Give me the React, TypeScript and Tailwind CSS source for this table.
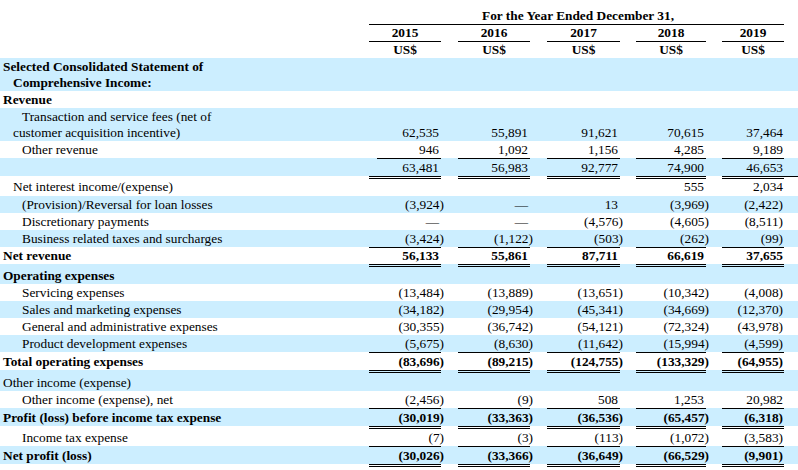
import React from "react";

const COLS =
  "grid grid-cols-[369px_72px_17px_72px_17px_73px_16px_70px_16px_62px_1fr]";

type Row = {
  bg?: boolean;
  b: 0 | 1 | 3;
  h: string;
  label?: React.ReactNode;
  lc?: string;
  vals?: (string | null)[];
  u?: boolean;
  bold?: boolean;
  vc?: string;
  first?: string;
  extra?: boolean;
};

function bcls(b: 0 | 1 | 3, on: boolean) {
  if (b === 0) return "";
  if (b === 1) return on ? "border-t border-black" : "border-t border-transparent";
  return on
    ? "border-t-[3px] border-double border-black"
    : "border-t-[3px] border-transparent";
}

const rows: Row[] = [
  {
    bg: true,
    b: 0,
    h: "h-[33px]",
    label: (
      <>
        Selected Consolidated Statement of
        <br />
        Comprehensive Income:
      </>
    ),
    lc: "pl-[13px] indent-[-10px] leading-[16px] pt-[1px] font-bold",
  },
  { b: 0, h: "h-[17px]", label: "Revenue", lc: "pl-[3px] font-bold leading-[17px]" },
  {
    bg: true,
    b: 0,
    h: "h-[33px]",
    label: (
      <>
        Transaction and service fees (net of
        <br />
        customer acquisition incentive)
      </>
    ),
    lc: "pl-[13px] indent-[9px] leading-[16px] pt-[1px]",
    vals: ["62,535", "55,891", "91,621", "70,615", "37,464"],
    vc: "pt-[17px] leading-[16px]",
  },
  {
    b: 0,
    h: "h-[17px]",
    label: "Other revenue",
    lc: "pl-[22px] leading-[17px]",
    vals: ["946", "1,092", "1,156", "4,285", "9,189"],
  },
  {
    bg: true,
    b: 1,
    u: true,
    h: "h-[18px]",
    label: "",
    lc: "",
    first: "ml-[8px]",
    vals: ["63,481", "56,983", "92,777", "74,900", "46,653"],
  },
  {
    b: 3,
    u: true,
    extra: true,
    h: "h-[20px]",
    label: "Net interest income/(expense)",
    lc: "pl-[13px] leading-[16px]",
    vals: [null, null, null, "555", "2,034"],
    vc: "leading-[16px]",
  },
  {
    bg: true,
    b: 0,
    h: "h-[17px]",
    label: "(Provision)/Reversal for loan losses",
    lc: "pl-[22px] leading-[17px]",
    vals: ["(3,924)", "—", "13", "(3,969)", "(2,422)"],
  },
  {
    b: 0,
    h: "h-[17px]",
    label: "Discretionary payments",
    lc: "pl-[22px] leading-[17px]",
    vals: ["—", "—", "(4,576)", "(4,605)", "(8,511)"],
  },
  {
    bg: true,
    b: 0,
    h: "h-[17px]",
    label: "Business related taxes and surcharges",
    lc: "pl-[22px] leading-[17px]",
    vals: ["(3,424)", "(1,122)", "(503)", "(262)", "(99)"],
  },
  {
    b: 1,
    u: true,
    h: "h-[17px]",
    bold: true,
    label: "Net revenue",
    lc: "pl-[3px] font-bold leading-[16px]",
    vals: ["56,133", "55,861", "87,711", "66,619", "37,655"],
    vc: "leading-[16px]",
  },
  {
    bg: true,
    b: 3,
    u: true,
    h: "h-[20px]",
    label: "Operating expenses",
    lc: "pl-[3px] font-bold leading-[17px]",
  },
  {
    b: 0,
    h: "h-[17px]",
    label: "Servicing expenses",
    lc: "pl-[22px] leading-[17px]",
    vals: ["(13,484)", "(13,889)", "(13,651)", "(10,342)", "(4,008)"],
  },
  {
    bg: true,
    b: 0,
    h: "h-[17px]",
    label: "Sales and marketing expenses",
    lc: "pl-[22px] leading-[17px]",
    vals: ["(34,182)", "(29,954)", "(45,341)", "(34,669)", "(12,370)"],
  },
  {
    b: 0,
    h: "h-[17px]",
    label: "General and administrative expenses",
    lc: "pl-[22px] leading-[17px]",
    vals: ["(30,355)", "(36,742)", "(54,121)", "(72,324)", "(43,978)"],
  },
  {
    bg: true,
    b: 0,
    h: "h-[17px]",
    label: "Product development expenses",
    lc: "pl-[22px] leading-[17px]",
    vals: ["(5,675)", "(8,630)", "(11,642)", "(15,994)", "(4,599)"],
  },
  {
    b: 1,
    u: true,
    h: "h-[18px]",
    bold: true,
    label: "Total operating expenses",
    lc: "pl-[3px] font-bold leading-[17px]",
    vals: ["(83,696)", "(89,215)", "(124,755)", "(133,329)", "(64,955)"],
  },
  {
    bg: true,
    b: 3,
    u: true,
    h: "h-[21px]",
    label: "Other income (expense)",
    lc: "pl-[3px] leading-[17px] pt-[1px]",
  },
  {
    b: 0,
    h: "h-[17px]",
    label: "Other income (expense), net",
    lc: "pl-[22px] leading-[17px]",
    vals: ["(2,456)", "(9)", "508", "1,253", "20,982"],
  },
  {
    bg: true,
    b: 1,
    u: true,
    h: "h-[18px]",
    bold: true,
    label: "Profit (loss) before income tax expense",
    lc: "pl-[3px] font-bold leading-[17px]",
    vals: ["(30,019)", "(33,363)", "(36,536)", "(65,457)", "(6,318)"],
  },
  {
    b: 3,
    u: true,
    h: "h-[20px]",
    label: "Income tax expense",
    lc: "pl-[22px] leading-[17px]",
    vals: ["(7)", "(3)", "(113)", "(1,072)", "(3,583)"],
  },
  {
    bg: true,
    b: 1,
    u: true,
    h: "h-[18px]",
    bold: true,
    label: "Net profit (loss)",
    lc: "pl-[3px] font-bold leading-[17px]",
    vals: ["(30,026)", "(33,366)", "(36,649)", "(66,529)", "(9,901)"],
  },
  { b: 3, u: true, h: "h-[3px]" },
];

function Value({ v, last }: { v: string | null; last: boolean }) {
  if (v == null) return null;
  if (!last && v.startsWith("(") && v.endsWith(")")) {
    return (
      <>
        {v.slice(0, -1)}
        <span className="-mr-[5px]">)</span>
      </>
    );
  }
  return <>{v}</>;
}

function TableRow({ r }: { r: Row }) {
  const cells: React.ReactNode[] = [];
  cells.push(
    <div
      key="label"
      className={`${bcls(r.b, false)} ${r.h} whitespace-nowrap ${r.lc ?? ""}`}
    >
      {r.label}
    </div>
  );
  for (let i = 0; i < 5; i++) {
    const last = i === 4;
    const v = r.vals ? r.vals[i] : null;
    cells.push(
      <div
        key={`v${i}`}
        className={`${bcls(r.b, !!r.u)} ${r.h} ${i === 0 && r.first ? r.first : ""} text-right whitespace-nowrap ${
          last ? "pr-[1px]" : "pr-[2px]"
        } ${r.bold ? "font-bold" : ""} ${r.vc ?? "leading-[17px]"}`}
      >
        <Value v={v} last={last} />
      </div>
    );
    if (i < 4) {
      cells.push(
        <div key={`g${i}`} className={`${bcls(r.b, false)} ${r.h}`} />
      );
    }
  }
  cells.push(
    <div key="tail" className={`${bcls(r.b, false)} ${r.h}`}>
      {r.extra ? <div className="-mt-[3px] h-px bg-black" /> : null}
    </div>
  );
  return (
    <div className={`${COLS} ${r.bg ? "bg-[#cceeff]" : "bg-white"}`}>{cells}</div>
  );
}

const years = ["2015", "2016", "2017", "2018", "2019"];

export default function App() {
  return (
    <div className="w-[798px] h-[470px] bg-white text-black font-['Liberation_Serif','Times_New_Roman',serif] text-[13.33px] overflow-hidden">
      {/* Title row */}
      <div className={`${COLS} h-[25px]`}>
        <div />
        <div className="col-start-2 col-end-11 border-b border-black h-[25px] pt-[7px] pl-[3px] leading-[17px] text-center font-bold whitespace-nowrap">
          For the Year Ended December 31,
        </div>
      </div>
      {/* Years row */}
      <div className={`${COLS} h-[16px]`}>
        <div />
        {years.map((y, i) => (
          <React.Fragment key={y}>
            <div className="h-[16px] leading-[16px] text-center font-bold">{y}</div>
            {i < 4 ? <div /> : null}
          </React.Fragment>
        ))}
        <div />
      </div>
      {/* US$ row */}
      <div className={`${COLS} h-[17px]`}>
        <div className="border-t border-transparent" />
        {years.map((y, i) => (
          <React.Fragment key={y}>
            <div className="border-t border-black h-[17px] leading-[16px] text-center font-bold">
              US$
            </div>
            {i < 4 ? <div className="border-t border-transparent" /> : null}
          </React.Fragment>
        ))}
        <div className="border-t border-transparent" />
      </div>
      {rows.map((r, i) => (
        <TableRow key={i} r={r} />
      ))}
    </div>
  );
}
